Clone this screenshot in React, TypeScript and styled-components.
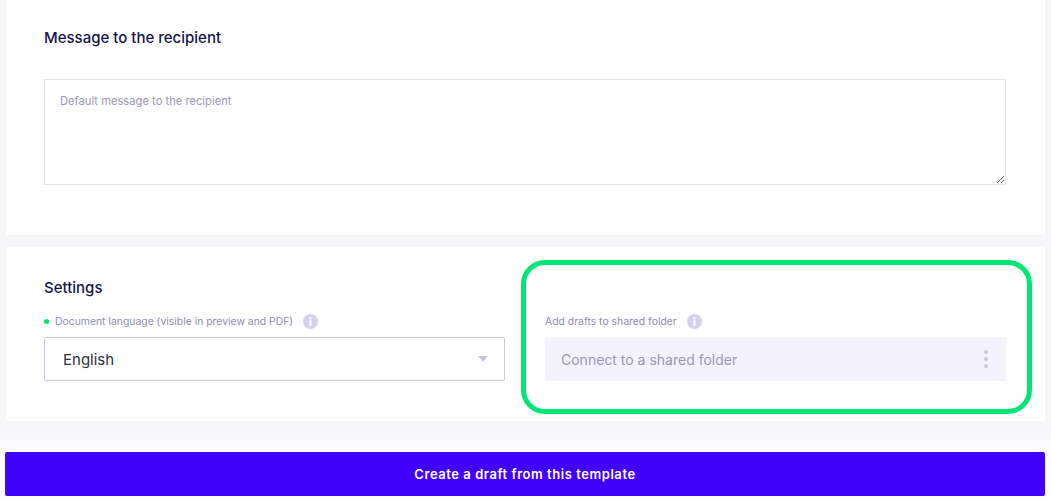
import React from 'react';
import styled, { createGlobalStyle } from 'styled-components';

const GlobalStyle = createGlobalStyle`
  html, body {
    margin: 0;
    padding: 0;
    height: 501px;
    overflow: hidden;
    background: #fcfcfe;
    font-family: Inter, "Liberation Sans", sans-serif;
  }
  * { box-sizing: border-box; }
`

const Page = styled.div`
  height: 501px;
  padding: 0 6px;
  background: linear-gradient(#f6f6f9 0, #f6f6f9 421px, #fbfbfd 450px, #fcfcfe 100%);
`
const Card = styled.section<{ $height: number }>`
  height: ${p => p.$height}px;
  background: #fff;
  padding: 0 38px;
`
const SettingsCard = styled(Card)`
  position: relative;
  margin-top: 12px;
  padding-top: 32px;
`
const Heading = styled.h2`
  margin: 0;
  font-size: 15px;
  line-height: 18px;
  font-weight: 500;
  color: #14154b;
`
const MessageHeading = styled(Heading)`
  padding-top: 29px;
`
const MessageBox = styled.textarea`
  display: block;
  width: 962px;
  height: 106px;
  margin-top: 32px;
  padding: 14px 15px;
  border: 1px solid #e3e3e9;
  border-radius: 0;
  outline: none;
  font-family: inherit;
  font-size: 11.2px;
  line-height: 14px;
  &::placeholder {
    color: #9a98b2;
    opacity: 1;
  }
`
const Fields = styled.div`
  display: grid;
  grid-template-columns: 461px 461px;
  column-gap: 40px;
  margin-top: 16px;
`
const Field = styled.div`
  display: flex;
  flex-direction: column;
`
const LabelRow = styled.div`
  display: flex;
  align-items: center;
  height: 16px;
  margin-bottom: 8px;
  font-size: 10.4px;
  color: #8f8daa;
`
const GreenDot = styled.span`
  width: 5px;
  height: 5px;
  margin-right: 6px;
  border-radius: 50%;
  background: #00e676;
`
const InfoBadge = styled.svg`
  width: 15px;
  height: 15px;
  margin-left: 10px;
`
const SelectBox = styled.div`
  display: flex;
  align-items: center;
  justify-content: space-between;
  height: 44px;
  padding: 0 16px 0 18px;
  border: 1px solid #c9c6e3;
  border-radius: 2px;
  font-size: 15px;
  color: #2f2f38;
`
const Caret = styled.span`
  width: 0;
  height: 0;
  border-left: 5.5px solid transparent;
  border-right: 5.5px solid transparent;
  border-top: 6px solid #c9c6e3;
`
const FolderBox = styled.div`
  display: flex;
  align-items: center;
  justify-content: space-between;
  height: 44px;
  padding: 0 18px 0 16px;
  border-radius: 2px;
  background: #f5f2ff;
  font-size: 14px;
  color: #9896b0;
`
const Dots = styled.span`
  display: flex;
  flex-direction: column;
  gap: 3px;
  i {
    width: 4px;
    height: 4px;
    border-radius: 50%;
    background: #c8c5d8;
  }
`
// green marker drawn over the card in the screenshot
const Highlight = styled.div`
  position: absolute;
  left: 515px;
  top: 13px;
  width: 511px;
  height: 154px;
  border: 5px solid #00e676;
  border-radius: 24px;
  pointer-events: none;
`
const CreateButton = styled.button`
  display: block;
  width: 1040px;
  height: 44px;
  margin: 31px 0 0 -1px;
  border: none;
  border-radius: 2px;
  background: #4200ff;
  color: #fff;
  font-family: inherit;
  font-size: 13px;
  font-weight: 600;
  letter-spacing: 0.55px;
`

const Info = () => (
  <InfoBadge viewBox="0 0 15 15">
    <circle cx="7.5" cy="7.5" r="7.5" fill="#d3d1ec" />
    <rect x="6.5" y="6.3" width="2" height="5.4" fill="#fff" />
    <circle cx="7.5" cy="4.2" r="1.2" fill="#fff" />
  </InfoBadge>
)

export default function App() {
  return (
    <Page>
      <GlobalStyle />
      <Card $height={235}>
        <MessageHeading>Message to the recipient</MessageHeading>
        <MessageBox placeholder="Default message to the recipient" />
      </Card>
      <SettingsCard $height={174}>
        <Heading>Settings</Heading>
        <Fields>
          <Field>
            <LabelRow>
              <GreenDot />
              Document language (visible in preview and PDF)
              <Info />
            </LabelRow>
            <SelectBox>
              English
              <Caret />
            </SelectBox>
          </Field>
          <Field>
            <LabelRow>
              Add drafts to shared folder
              <Info />
            </LabelRow>
            <FolderBox>
              Connect to a shared folder
              <Dots><i /><i /><i /></Dots>
            </FolderBox>
          </Field>
        </Fields>
        <Highlight />
      </SettingsCard>
      <CreateButton>Create a draft from this template</CreateButton>
    </Page>
  );
}
